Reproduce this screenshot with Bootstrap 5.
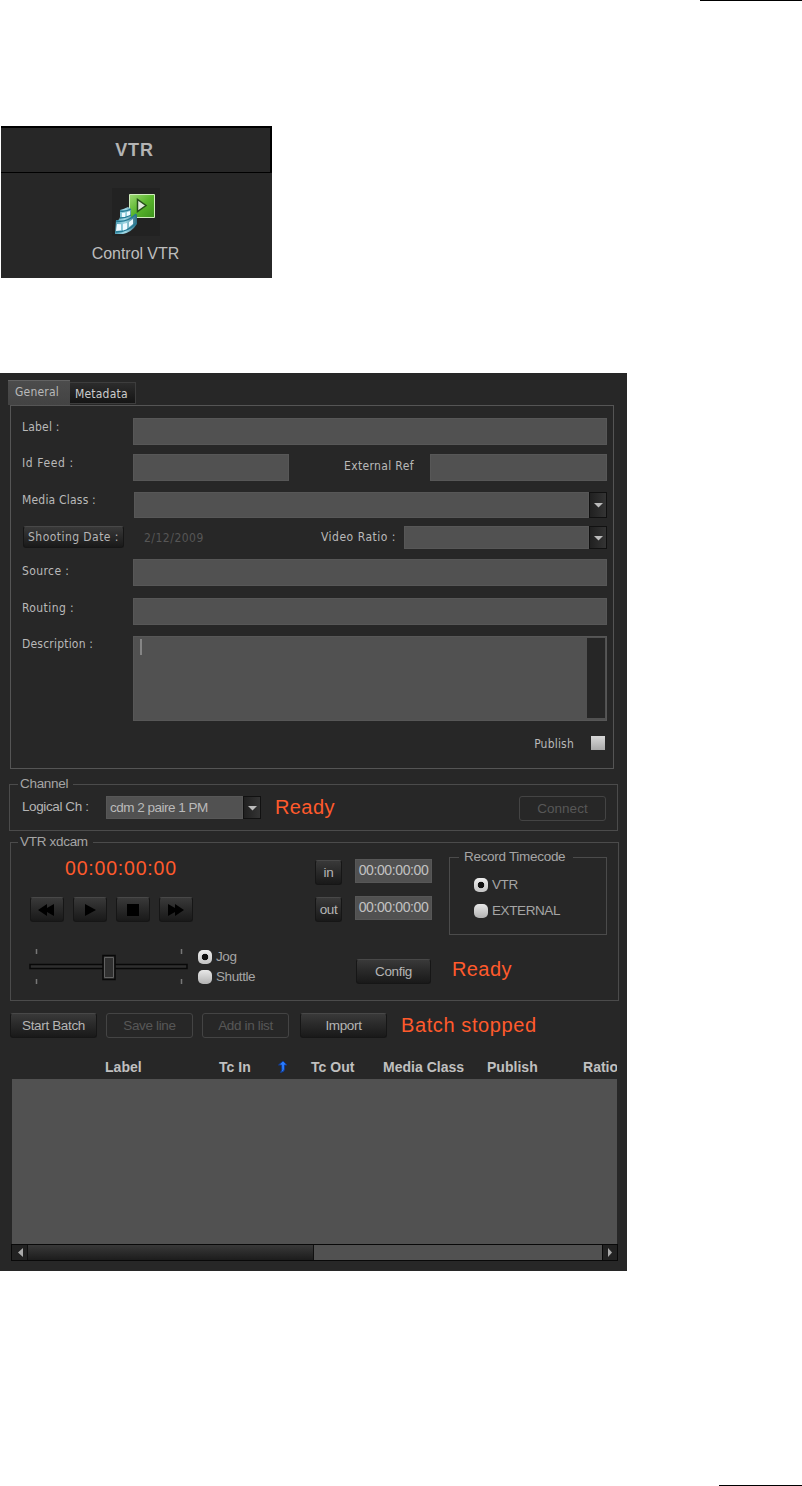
<!DOCTYPE html>
<html lang="en">
<head>
<meta charset="utf-8">
<meta name="viewport" content="width=device-width, initial-scale=1">
<title>VTR control</title>
<link href="https://cdn.jsdelivr.net/npm/bootstrap@5.3.0/dist/css/bootstrap.min.css" rel="stylesheet">
<style>
body{background:#fff;color:#b9b9b9;font:12px/16px "Liberation Sans",Arial,sans-serif;width:802px;height:1486px;overflow:hidden}
.page{height:1486px}
.rule-top{width:102px;height:1px;background:#000}
.rule-bottom{width:83px;height:1px;background:#000}
.launcher{width:271px;height:152px;margin:125px 0 0 1px;background:#272727}
.launcher-head{height:47px;border:solid #000;border-width:2px 2px 1px 0;font-size:18px;font-weight:700;letter-spacing:.8px;padding-right:2px;color:#b4b4b4}
.launcher-icon{margin-top:15px}
.launcher-name{font-size:16px;line-height:20px;margin-top:8px;letter-spacing:-.05px;padding-right:2px;color:#bdbdbd}
.console{width:627px;height:898px;margin-top:95px;background:#272727;padding:7px 9px 0 8px}
.tah{font-family:"DejaVu Sans Condensed","DejaVu Sans",sans-serif;font-size:12px;font-stretch:condensed;letter-spacing:.2px}
.tabs{height:25px}
.tab-on{width:62px;height:25px;background:linear-gradient(#4c4c4c,#434343);border-top:1px solid #626262;padding:3px 0 0 7px}
.tab-off{width:66px;height:22px;margin-top:2px;background:linear-gradient(#2c2c2c,#151515);border:1px solid #3d3d3d;border-left:0;padding:3px 0 0 5px;color:#ccc}
.frame{margin-left:2px;width:604px;height:364px;border:1px solid #555;padding:12px 6px 0 11px}
.lab{width:111px;flex:none}
.fill{background:#515151;box-shadow:inset 0 0 0 1px #575757;border:0}
.fline{height:27px}
.btn.dark{background:linear-gradient(#393939,#2a2a2a 45%,#191919);border:1px solid #161616;border-top-color:#484848;border-radius:3px;padding:0;color:#b5b5b5;font-size:13.5px;letter-spacing:-.35px;line-height:22px;height:25px;flex:none}
.btn.date{font-size:12px;letter-spacing:.45px;line-height:20px;height:22px}
.btn.off{background:none;border:1px solid #444;color:#575757}
.drop{width:18px;height:26px;border:1px solid #111;background:linear-gradient(90deg,#202020,#343434);flex:none}
.drop svg,.arrow svg{display:block}
.memo{height:85px;width:474px;padding:3px 2px 2px 7px}
.caret{width:2px;height:16px;background:#858585}
.memo-bar{width:18px;height:80px;background:#262626;margin-top:-1px}
.check{width:14px;height:14px;background:linear-gradient(#d8d8d8,#a9a9a9)}
.group{border:1px solid #4b4b4b;position:relative}
.group-title{position:absolute;top:-9px;left:8px;padding:0 5px 0 2px;background:#272727;font-size:13.5px;letter-spacing:-.3px;line-height:16px;color:#a5a5a5;white-space:nowrap}
.status{color:#ff5a2c;font-size:20px;line-height:24px;letter-spacing:.4px;white-space:nowrap}
.clock{font-size:19.5px;letter-spacing:.8px}
.radio{width:14px;height:14px;border-radius:5px;background:linear-gradient(#e8e8e8,#b2b2b2);flex:none}
.radio.on{background:radial-gradient(circle,#111 0 3px,transparent 3.6px),linear-gradient(#efefef,#c2c2c2)}
.opt{font-size:13.5px;letter-spacing:-.4px;line-height:16px;color:#a5a5a5;white-space:nowrap}
.radio+.opt{margin-top:-1px}
.tc{width:77px;height:24px;font-size:14px;line-height:22px;letter-spacing:-.4px;text-align:center;color:#c2c2c2}
.heads{height:23px;width:605px;margin-left:4px;overflow:hidden;display:grid;grid-template-columns:93px 114px 57px 35px 72px 104px 96px 34px;font-size:14px;font-weight:700;white-space:nowrap;color:#c0c0c0;letter-spacing:.02px}
.rows{height:165px;width:605px;margin-left:4px;background:#515151}
.scroller{height:17px;width:607px;margin-left:3px;background:#515151;border:1px solid #090909}
.arrow{width:15px;background:#222}
.arrow-end{border-left:1px solid #090909}
.thumb{width:287px;background:linear-gradient(#393939,#1c1c1c);border-left:1px solid #101010;border-right:1px solid #101010}
</style>
</head>
<body>
<div class="page d-flex flex-column">
  <div class="rule-top ms-auto"></div>

  <section class="launcher d-flex flex-column">
    <div class="launcher-head d-flex align-items-center justify-content-center">VTR</div>
    <div class="launcher-icon d-flex justify-content-center" style="padding-right:2px">
      <svg width="48" height="48" viewBox="0 0 48 48">
        <defs><linearGradient id="g" x2="1" y2="1"><stop stop-color="#9cd873"/><stop offset=".5" stop-color="#59b52c"/><stop offset="1" stop-color="#3c931c"/></linearGradient>
        <linearGradient id="b" x2="1"><stop stop-color="#4c9db5"/><stop offset=".45" stop-color="#a4dbe8"/><stop offset="1" stop-color="#2b6a80"/></linearGradient></defs>
        <path fill="#222" d="M0 0h48v48H0z"/>
        <path d="M17.500 6.500h25v23h-25z" fill="url(#g)" stroke="#d0edbd"/>
        <path d="M25.500 11.500v12l8.500-6z" fill="#e0e9dd" stroke="#264f1a" stroke-width="1.500"/>
        <path d="M4 32q3 1 4-3v-7q4-1 8-3l3 2v9l6-4v10q-5 8-14 10H3z" fill="url(#b)"/>
        <path d="M4 33q11 2 20-7M8 23q6 1 11-2M4 44q12 0 20-9M8 30q6 0 11-3" fill="none" stroke="#247a94" stroke-width="1.300"/>
        <path d="m5 36 4 .300v6L4 43zm6 0 4-1v6l-4 1.500zm6-2 4-3v5l-4 3zM10 25h3v4h-3zm5-1 3-1v4l-3 1z" fill="#eefaff"/>
      </svg>
    </div>
    <div class="launcher-name text-center">Control VTR</div>
  </section>

  <main class="console">
    <nav class="tabs d-flex tah"><div class="tab-on">General</div><div class="tab-off">Metadata</div></nav>
    <form class="frame tah">
      <div class="fline d-flex"><label class="lab" style="padding-top:1px">Label :</label><div class="fill flex-fill"></div></div>
      <div class="fline d-flex" style="margin-top:9px"><label class="lab" style="padding-top:1px;letter-spacing:.6px">Id Feed :</label><div class="fill" style="width:156px"></div><label style="width:141px;padding:4px 0 0 55px;letter-spacing:.35px" class="text-nowrap">External Ref</label><div class="fill flex-fill"></div></div>
      <div class="d-flex" style="height:26px;margin-top:11px"><label class="lab" style="width:112px">Media Class :</label><div class="fill flex-fill"></div><div class="drop"><svg width="16" height="24"><path d="M4 10h9l-4.500 4.500z" fill="#bbb"/></svg></div></div>
      <div class="d-flex" style="height:23px;margin-top:8px"><button type="button" class="btn dark date tah" style="width:101px;margin-left:1px">Shooting Date :</button><span style="width:197px;padding:4px 0 0 20px;color:#565656;letter-spacing:.5px">2/12/2009</span><label class="text-nowrap" style="width:83px;padding-top:3px;letter-spacing:.5px">Video Ratio :</label><div class="fill flex-fill"></div><div class="drop" style="height:23px"><svg width="16" height="21"><path d="M4 9h9l-4.500 4.500z" fill="#bbb"/></svg></div></div>
      <div class="fline d-flex" style="margin-top:10px"><label class="lab" style="padding-top:4px;letter-spacing:.4px">Source :</label><div class="fill flex-fill"></div></div>
      <div class="fline d-flex" style="margin-top:12px"><label class="lab" style="padding-top:2px;letter-spacing:.4px">Routing :</label><div class="fill flex-fill"></div></div>
      <div class="d-flex" style="margin-top:11px"><label class="lab">Description :</label><div class="fill memo d-flex justify-content-between"><div class="caret"></div><div class="memo-bar"></div></div></div>
      <div class="d-flex justify-content-end" style="margin-top:15px"><label style="margin-right:17px">Publish</label><div class="check" style="margin-right:2px"></div></div>
    </form>

    <section class="group d-flex" style="width:609px;height:47px;margin:15px 0 0 1px">
      <div class="group-title">Channel</div>
      <label class="opt" style="width:96px;padding:14px 0 0 12px;color:#b5b5b5">Logical Ch :</label>
      <div class="fill opt" style="width:137px;height:23px;margin-top:11px;padding:4px 0 0 4px;color:#bababa;letter-spacing:-.5px">cdm 2 paire 1 PM</div>
      <div class="drop" style="height:23px;margin-top:11px"><svg width="16" height="21"><path d="M4 9h9l-4.500 4.500z" fill="#bbb"/></svg></div>
      <div class="status" style="margin:10px 0 0 14px">Ready</div>
      <button type="button" class="btn dark off ms-auto" style="width:87px;margin:11px 11px 0 0;letter-spacing:0">Connect</button>
    </section>

    <section class="group d-flex" style="width:609px;height:159px;margin:11px 0 0 2px">
      <div class="group-title" style="left:7px">VTR xdcam</div>
      <div style="width:304px">
        <div class="status clock" style="padding:13px 0 0 54px">00:00:00:00</div>
        <div class="d-flex" style="gap:9px;margin:17px 0 0 19px">
          <button type="button" class="btn dark" style="width:34px"><svg class="d-block m-auto" width="20" height="14"><path d="m1 7 9-6v4l7-4v12l-7-4v4z"/></svg></button>
          <button type="button" class="btn dark" style="width:34px"><svg class="d-block m-auto" width="20" height="14"><path d="m5 1 11 6-11 6z"/></svg></button>
          <button type="button" class="btn dark" style="width:34px"><svg class="d-block m-auto" width="20" height="14"><path d="M4 1h12v12H4z"/></svg></button>
          <button type="button" class="btn dark" style="width:34px"><svg class="d-block m-auto" width="20" height="14"><path d="m18 7-9-6v4L2 1v12l7-4v4z"/></svg></button>
        </div>
        <div class="d-flex" style="margin:26px 0 0 18px">
          <svg width="160" height="40"><path d="M7.500 1v5m145-5v5m-145 25v5m145-5v5" stroke="#777" stroke-width="1.500"/><path d="M1 16.500h157v4H1z" fill="#2f2f2f" stroke="#080808" stroke-width="1.500"/><path d="M74 7.500h12v24H74z" fill="#303030" stroke="#080808" stroke-width="1.500"/><path d="M75.500 9.500h9v20h-9z" fill="none" stroke="#626262"/></svg>
          <div style="margin:2px 0 0 9px">
            <div class="d-flex" style="gap:4px;height:16px"><i class="radio on"></i><span class="opt">Jog</span></div>
            <div class="d-flex" style="gap:4px;margin-top:4px"><i class="radio"></i><span class="opt">Shuttle</span></div>
          </div>
        </div>
      </div>
      <div style="width:134px;padding-top:16px">
        <div class="d-flex"><button type="button" class="btn dark" style="width:27px;margin-top:1px">in</button><div class="fill tc" style="margin-left:13px">00:00:00:00</div></div>
        <div class="d-flex" style="margin-top:11px"><button type="button" class="btn dark" style="width:27px;margin-top:1px">out</button><div class="fill tc" style="margin-left:13px">00:00:00:00</div></div>
        <div class="d-flex" style="margin-top:37px"><button type="button" class="btn dark" style="width:75px;margin-left:41px">Config</button><div class="status" style="margin-left:21px;margin-top:-2px">Ready</div></div>
      </div>
      <div>
        <div class="group" style="width:158px;height:78px;margin-top:14px;padding:20px 0 0 24px">
          <div class="group-title" style="left:9px;padding:0 8px 0 5px">Record Timecode</div>
          <div class="d-flex" style="gap:4px;height:16px"><i class="radio on"></i><span class="opt">VTR</span></div>
          <div class="d-flex" style="gap:4px;margin-top:10px"><i class="radio"></i><span class="opt">EXTERNAL</span></div>
        </div>
      </div>
    </section>

    <div class="d-flex" style="margin:12px 0 0 2px">
      <button type="button" class="btn dark" style="width:87px">Start Batch</button>
      <button type="button" class="btn dark off" style="width:87px;margin-left:9px">Save line</button>
      <button type="button" class="btn dark off" style="width:87px;margin-left:9px">Add in list</button>
      <button type="button" class="btn dark" style="width:87px;margin-left:11px">Import</button>
      <div class="status" style="margin-left:14px;letter-spacing:.6px">Batch stopped</div>
    </div>

    <div class="heads" style="margin-top:18px;padding-top:3px"><span>&nbsp;</span><span>Label</span><span>Tc In</span><svg width="14" height="16"><path d="M2.500 6 7 2l4 4H8.500v4q0 3-4 3.500 2-2 1-7.500z" fill="#277bff" stroke="#123b91"/></svg><span>Tc Out</span><span>Media Class</span><span>Publish</span><span>Ratio</span></div>
    <div class="rows"></div>
    <div class="scroller d-flex">
      <div class="arrow"><svg width="15" height="15"><path d="M11 3v9L6 7.500z" fill="#aaa"/></svg></div><div class="thumb"></div>
      <div class="arrow arrow-end ms-auto"><svg width="15" height="15"><path d="M5 3v9l4-4.500z" fill="#aaa"/></svg></div>
    </div>
  </main>
  <div class="rule-bottom ms-auto mt-auto"></div>
</div>
<script src="https://cdn.jsdelivr.net/npm/bootstrap@5.3.0/dist/js/bootstrap.bundle.min.js"></script>
</body>
</html>
